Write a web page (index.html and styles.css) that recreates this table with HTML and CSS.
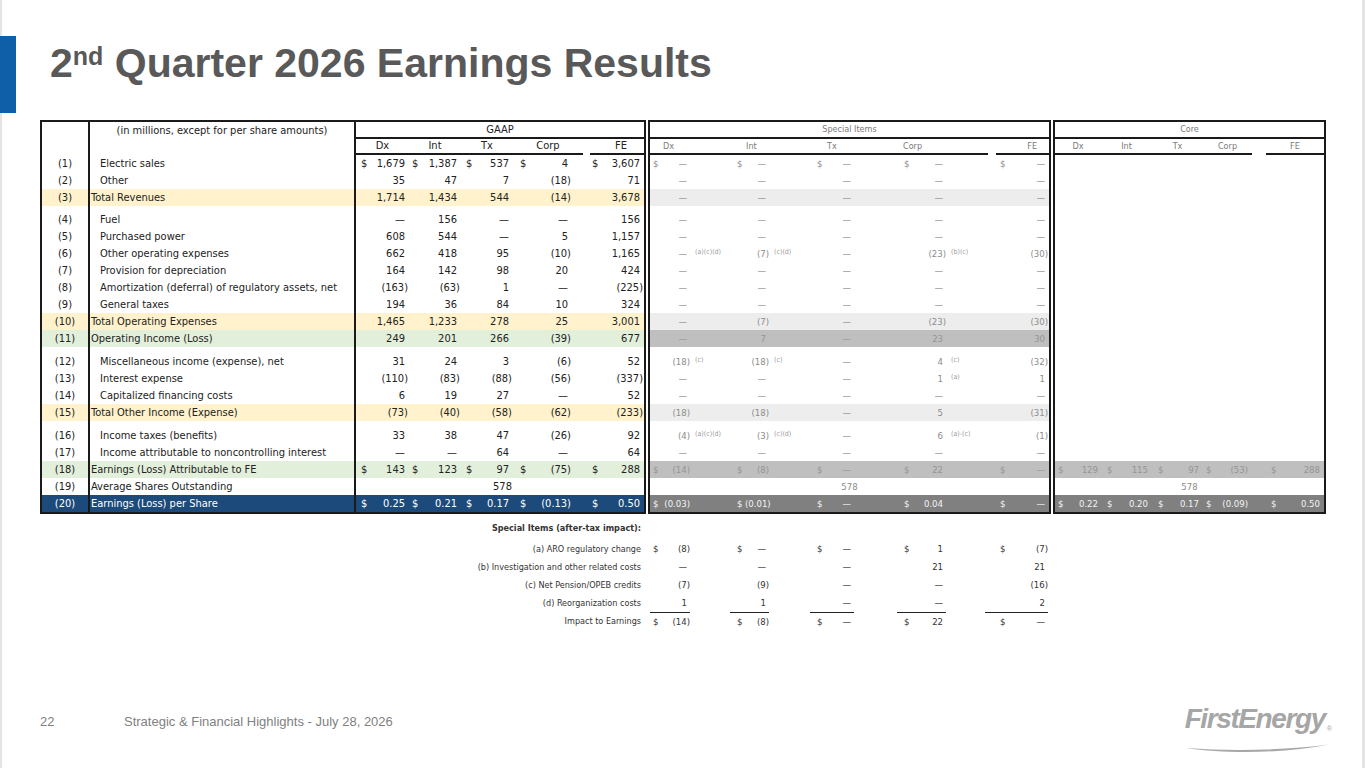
FILE: index.html
```html
<!DOCTYPE html>
<html lang="en">
<head>
<meta charset="utf-8">
<title>2nd Quarter 2026 Earnings Results</title>
<link rel="stylesheet" href="styles.css">
</head>
<body>
<div class="slide">
  <header class="head">
    <div class="bar"></div>
    <h1>2<sup>nd</sup> Quarter 2026 Earnings Results</h1>
  </header>

  <section class="tables">
    <div class="box gaap">
      <div class="row h1r"><div class="no"></div><div class="lb hd">(in millions, except for per share amounts)</div><div class="gh">GAAP</div></div>
      <div class="row h2r"><div class="no"></div><div class="lb"></div><div class="u">Dx</div><div class="u">Int</div><div class="u">Tx</div><div class="u ux">Corp</div><div class="u uf">FE</div></div>
      <div class="row v"><div class="no">(1)</div><div class="lb">Electric sales</div><div class="c"><i>$</i>1,679</div><div class="c"><i>$</i>1,387</div><div class="c"><i>$</i>537</div><div class="c"><i>$</i>4</div><div class="c"><i>$</i>3,607</div></div>
      <div class="row v"><div class="no">(2)</div><div class="lb">Other</div><div class="c">35</div><div class="c">47</div><div class="c">7</div><div class="c n">(18)</div><div class="c">71</div></div>
      <div class="row v y"><div class="no">(3)</div><div class="lb t">Total Revenues</div><div class="c">1,714</div><div class="c">1,434</div><div class="c">544</div><div class="c n">(14)</div><div class="c">3,678</div></div>
      <div class="row g5"><div class="no"></div><div class="lb"></div></div>
      <div class="row v"><div class="no">(4)</div><div class="lb">Fuel</div><div class="c">—</div><div class="c">156</div><div class="c">—</div><div class="c">—</div><div class="c">156</div></div>
      <div class="row v"><div class="no">(5)</div><div class="lb">Purchased power</div><div class="c">608</div><div class="c">544</div><div class="c">—</div><div class="c">5</div><div class="c">1,157</div></div>
      <div class="row v"><div class="no">(6)</div><div class="lb">Other operating expenses</div><div class="c">662</div><div class="c">418</div><div class="c">95</div><div class="c n">(10)</div><div class="c">1,165</div></div>
      <div class="row v"><div class="no">(7)</div><div class="lb">Provision for depreciation</div><div class="c">164</div><div class="c">142</div><div class="c">98</div><div class="c">20</div><div class="c">424</div></div>
      <div class="row v"><div class="no">(8)</div><div class="lb">Amortization (deferral) of regulatory assets, net</div><div class="c n">(163)</div><div class="c n">(63)</div><div class="c">1</div><div class="c">—</div><div class="c n">(225)</div></div>
      <div class="row v"><div class="no">(9)</div><div class="lb">General taxes</div><div class="c">194</div><div class="c">36</div><div class="c">84</div><div class="c">10</div><div class="c">324</div></div>
      <div class="row v y"><div class="no">(10)</div><div class="lb t">Total Operating Expenses</div><div class="c">1,465</div><div class="c">1,233</div><div class="c">278</div><div class="c">25</div><div class="c">3,001</div></div>
      <div class="row v gr"><div class="no">(11)</div><div class="lb t">Operating Income (Loss)</div><div class="c">249</div><div class="c">201</div><div class="c">266</div><div class="c n">(39)</div><div class="c">677</div></div>
      <div class="row g6"><div class="no"></div><div class="lb"></div></div>
      <div class="row v"><div class="no">(12)</div><div class="lb">Miscellaneous income (expense), net</div><div class="c">31</div><div class="c">24</div><div class="c">3</div><div class="c n">(6)</div><div class="c">52</div></div>
      <div class="row v"><div class="no">(13)</div><div class="lb">Interest expense</div><div class="c n">(110)</div><div class="c n">(83)</div><div class="c n">(88)</div><div class="c n">(56)</div><div class="c n">(337)</div></div>
      <div class="row v"><div class="no">(14)</div><div class="lb">Capitalized financing costs</div><div class="c">6</div><div class="c">19</div><div class="c">27</div><div class="c">—</div><div class="c">52</div></div>
      <div class="row v y"><div class="no">(15)</div><div class="lb t">Total Other Income (Expense)</div><div class="c n">(73)</div><div class="c n">(40)</div><div class="c n">(58)</div><div class="c n">(62)</div><div class="c n">(233)</div></div>
      <div class="row g6"><div class="no"></div><div class="lb"></div></div>
      <div class="row v"><div class="no">(16)</div><div class="lb">Income taxes (benefits)</div><div class="c">33</div><div class="c">38</div><div class="c">47</div><div class="c n">(26)</div><div class="c">92</div></div>
      <div class="row v"><div class="no">(17)</div><div class="lb">Income attributable to noncontrolling interest</div><div class="c">—</div><div class="c">—</div><div class="c">64</div><div class="c">—</div><div class="c">64</div></div>
      <div class="row v gr"><div class="no">(18)</div><div class="lb t">Earnings (Loss) Attributable to FE</div><div class="c"><i>$</i>143</div><div class="c"><i>$</i>123</div><div class="c"><i>$</i>97</div><div class="c n"><i>$</i>(75)</div><div class="c"><i>$</i>288</div></div>
      <div class="row v"><div class="no">(19)</div><div class="lb t">Average Shares Outstanding</div><div class="mid">578</div></div>
      <div class="row v bl"><div class="no">(20)</div><div class="lb t">Earnings (Loss) per Share</div><div class="c"><i>$</i>0.25</div><div class="c"><i>$</i>0.21</div><div class="c"><i>$</i>0.17</div><div class="c n"><i>$</i>(0.13)</div><div class="c"><i>$</i>0.50</div></div>
    </div>

    <div class="box sp">
      <div class="row h1r"><div class="sh">Special Items</div></div>
      <div class="row h2r"><div class="u">Dx</div><div class="u">Int</div><div class="u">Tx</div><div class="u">Corp</div><div class="u">FE</div></div>
      <div class="row v scol"><div class="c"><i>$</i><span>—</span></div><div class="c"><i>$</i><span>—</span></div><div class="c"><i>$</i><span>—</span></div><div class="c"><i>$</i><span>—</span></div><div class="c"><i>$</i><span>—</span></div></div>
      <div class="row v scol"><div class="c"><span>—</span></div><div class="c"><span>—</span></div><div class="c"><span>—</span></div><div class="c"><span>—</span></div><div class="c"><span>—</span></div></div>
      <div class="row v scol l1"><div class="c"><span>—</span></div><div class="c"><span>—</span></div><div class="c"><span>—</span></div><div class="c"><span>—</span></div><div class="c"><span>—</span></div></div>
      <div class="g5"></div>
      <div class="row v scol"><div class="c"><span>—</span></div><div class="c"><span>—</span></div><div class="c"><span>—</span></div><div class="c"><span>—</span></div><div class="c"><span>—</span></div></div>
      <div class="row v scol"><div class="c"><span>—</span></div><div class="c"><span>—</span></div><div class="c"><span>—</span></div><div class="c"><span>—</span></div><div class="c"><span>—</span></div></div>
      <div class="row v scol"><div class="c"><span>—</span><small>(a)(c)(d)</small></div><div class="c n"><span>(7)</span><small>(c)(d)</small></div><div class="c"><span>—</span></div><div class="c n"><span>(23)</span><small>(b)(c)</small></div><div class="c n"><span>(30)</span></div></div>
      <div class="row v scol"><div class="c"><span>—</span></div><div class="c"><span>—</span></div><div class="c"><span>—</span></div><div class="c"><span>—</span></div><div class="c"><span>—</span></div></div>
      <div class="row v scol"><div class="c"><span>—</span></div><div class="c"><span>—</span></div><div class="c"><span>—</span></div><div class="c"><span>—</span></div><div class="c"><span>—</span></div></div>
      <div class="row v scol"><div class="c"><span>—</span></div><div class="c"><span>—</span></div><div class="c"><span>—</span></div><div class="c"><span>—</span></div><div class="c"><span>—</span></div></div>
      <div class="row v scol l1"><div class="c"><span>—</span></div><div class="c n"><span>(7)</span></div><div class="c"><span>—</span></div><div class="c n"><span>(23)</span></div><div class="c n"><span>(30)</span></div></div>
      <div class="row v scol g2"><div class="c"><span>—</span></div><div class="c"><span>7</span></div><div class="c"><span>—</span></div><div class="c"><span>23</span></div><div class="c"><span>30</span></div></div>
      <div class="g6"></div>
      <div class="row v scol"><div class="c n"><span>(18)</span><small>(c)</small></div><div class="c n"><span>(18)</span><small>(c)</small></div><div class="c"><span>—</span></div><div class="c"><span>4</span><small>(c)</small></div><div class="c n"><span>(32)</span></div></div>
      <div class="row v scol"><div class="c"><span>—</span></div><div class="c"><span>—</span></div><div class="c"><span>—</span></div><div class="c"><span>1</span><small>(a)</small></div><div class="c"><span>1</span></div></div>
      <div class="row v scol"><div class="c"><span>—</span></div><div class="c"><span>—</span></div><div class="c"><span>—</span></div><div class="c"><span>—</span></div><div class="c"><span>—</span></div></div>
      <div class="row v scol l1"><div class="c n"><span>(18)</span></div><div class="c n"><span>(18)</span></div><div class="c"><span>—</span></div><div class="c"><span>5</span></div><div class="c n"><span>(31)</span></div></div>
      <div class="g6"></div>
      <div class="row v scol"><div class="c n"><span>(4)</span><small>(a)(c)(d)</small></div><div class="c n"><span>(3)</span><small>(c)(d)</small></div><div class="c"><span>—</span></div><div class="c"><span>6</span><small>(a)-(c)</small></div><div class="c n"><span>(1)</span></div></div>
      <div class="row v scol"><div class="c"><span>—</span></div><div class="c"><span>—</span></div><div class="c"><span>—</span></div><div class="c"><span>—</span></div><div class="c"><span>—</span></div></div>
      <div class="row v scol g2"><div class="c n"><i>$</i><span>(14)</span></div><div class="c n"><i>$</i><span>(8)</span></div><div class="c"><i>$</i><span>—</span></div><div class="c"><i>$</i><span>22</span></div><div class="c"><i>$</i><span>—</span></div></div>
      <div class="row v"><div class="mid">578</div></div>
      <div class="row v scol dk"><div class="c n"><i>$</i><span>(0.03)</span></div><div class="c n"><i>$</i><span>(0.01)</span></div><div class="c"><i>$</i><span>—</span></div><div class="c"><i>$</i><span>0.04</span></div><div class="c"><i>$</i><span>—</span></div></div>
    </div>

    <div class="box core">
      <div class="row h1r"><div class="sh">Core</div></div>
      <div class="row h2r"><div class="u">Dx</div><div class="u">Int</div><div class="u">Tx</div><div class="u">Corp</div><div class="u uf">FE</div></div>
      <div class="cgap"></div>
      <div class="row v g2"><div class="c"><i>$</i>129</div><div class="c"><i>$</i>115</div><div class="c"><i>$</i>97</div><div class="c n"><i>$</i>(53)</div><div class="c"><i>$</i>288</div></div>
      <div class="row v"><div class="mid">578</div></div>
      <div class="row v dk"><div class="c"><i>$</i>0.22</div><div class="c"><i>$</i>0.20</div><div class="c"><i>$</i>0.17</div><div class="c n"><i>$</i>(0.09)</div><div class="c"><i>$</i>0.50</div></div>
    </div>
  </section>

  <section class="notes">
    <div class="ntitle">Special Items (after-tax impact):</div>
    <div class="nrow first"><div class="nl">(a) ARO regulatory change</div><div class="scol"><div class="c n"><i>$</i><span>(8)</span></div><div class="c"><i>$</i><span>—</span></div><div class="c"><i>$</i><span>—</span></div><div class="c"><i>$</i><span>1</span></div><div class="c n"><i>$</i><span>(7)</span></div></div></div>
    <div class="nrow"><div class="nl">(b) Investigation and other related costs</div><div class="scol"><div class="c"><span>—</span></div><div class="c"><span>—</span></div><div class="c"><span>—</span></div><div class="c"><span>21</span></div><div class="c"><span>21</span></div></div></div>
    <div class="nrow"><div class="nl">(c) Net Pension/OPEB credits</div><div class="scol"><div class="c n"><span>(7)</span></div><div class="c n"><span>(9)</span></div><div class="c"><span>—</span></div><div class="c"><span>—</span></div><div class="c n"><span>(16)</span></div></div></div>
    <div class="nrow"><div class="nl">(d) Reorganization costs</div><div class="scol"><div class="c"><span>1</span></div><div class="c"><span>1</span></div><div class="c"><span>—</span></div><div class="c"><span>—</span></div><div class="c"><span>2</span></div></div></div>
    <div class="nrow tot"><div class="nl">Impact to Earnings</div><div class="scol"><div class="c n"><i>$</i><span>(14)</span></div><div class="c n"><i>$</i><span>(8)</span></div><div class="c"><i>$</i><span>—</span></div><div class="c"><i>$</i><span>22</span></div><div class="c"><i>$</i><span>—</span></div></div></div>
  </section>

  <footer class="foot">
    <span class="pg">22</span>
    <span class="ft">Strategic &amp; Financial Highlights - July 28, 2026</span>
    <div class="logo">
      <div class="name">FirstEnergy<span class="reg">®</span></div>
      <svg class="swoosh" width="146" height="10" viewBox="0 0 146 10"><path d="M1 5 C 42 11, 98 10.5, 144 1.5 C 99 7.5, 44 8.2, 1 5 Z" fill="#a8a8a8"/></svg>
    </div>
  </footer>
</div>
</body>
</html>
```

FILE: styles.css
```css
* { box-sizing: border-box; }
body { margin: 0; background: #fff; }

.slide {
  width: 1365px;
  height: 768px;
  overflow: hidden;
  background: #fff;
  box-shadow: inset 2px 0 #e4e4e4, inset -3px 0 #e4e4e4;
  font-family: "Liberation Sans Narrow", "Arial Narrow", "DejaVu Sans Condensed", sans-serif;
}

/* title */
.head { display: flex; margin-top: 36px; height: 77px; }
.bar { width: 16px; background: #0f5fa8; }
.head h1 {
  margin: 7px 0 0 34px;
  font: bold 41px/41px "Liberation Sans", Arial, sans-serif;
  color: #595959;
}
.head h1 sup { font-size: 25px; line-height: 0; vertical-align: 12px; }

/* tables */
.tables { display: flex; gap: 2px; margin: 7px 0 0 40px; }
.box { border: 2px solid #1a1a1a; display: flex; flex-direction: column; }
.gaap { width: 606px; font-size: 11px; color: #222; }
.sp { width: 403px; font-size: 9.5px; color: #8c8c8c; }
.core { width: 273px; font-size: 9.5px; color: #8c8c8c; }

.row { display: grid; height: 17px; line-height: 17px; white-space: nowrap; }
.gaap .row { grid-template-columns: 48px 266px 53px 52px 52px 59px 72px; }
.sp .row { grid-template-columns: 80px 80px 87px 88px 64px; }
.core .row { grid-template-columns: 46px 51px 51px 49px 72px; }
.h2r { height: 16px; }
.g5 { height: 5px; }
.g6 { height: 6px; }
.cgap { height: 306px; }

.no { border-right: 2px solid #1a1a1a; text-align: center; }
.lb { border-right: 2px solid #1a1a1a; padding-left: 10px; }
.lb.t { padding-left: 1px; }
.lb.hd { padding-left: 0; text-align: center; }

.gh { grid-column: 3 / 8; text-align: center; border-bottom: 2px solid #1a1a1a; line-height: 15px; }
.sh { grid-column: 1 / -1; text-align: center; border-bottom: 2px solid #1a1a1a; line-height: 15px; color: #7a7a7a; font-size: 9px; }
.h2r .u { border-bottom: 2px solid #1a1a1a; line-height: 14px; text-align: center; }
.gaap .h2r .ux { margin-right: -11px; }
.gaap .h2r .uf { margin-left: 18px; padding-left: 8px; }
.core .h2r .uf { margin-left: 14px; }
.sp .h2r .u, .core .h2r .u { color: #7a7a7a; font-size: 9px; }
.sp .h2r .u { text-align: left; }
.sp .h2r > :nth-child(1) { padding-left: 13px; }
.sp .h2r > :nth-child(2) { padding-left: 16px; }
.sp .h2r > :nth-child(3) { padding-left: 17px; }
.sp .h2r > :nth-child(4) { padding-left: 6px; margin-right: -3px; }
.sp .h2r > :nth-child(5) { margin-left: 11px; text-align: right; padding-right: 12px; }

.mid { grid-column: 1 / -1; text-align: center; }
.gaap .mid { grid-column: 3 / 8; }

/* GAAP and Core value cells: $ at left, figure at right */
.gaap .c, .core .c { display: flex; justify-content: flex-end; padding-right: 4px; }
.gaap .c i, .core .c i { font-style: normal; margin-right: auto; }
.gaap .c.n { padding-right: 1px; }
.gaap .v > :nth-child(3) { padding-left: 5px; }
.gaap .v > :nth-child(4) { padding-left: 3px; }
.gaap .v > :nth-child(5) { padding-left: 5px; }
.gaap .v > :nth-child(6) { padding-left: 7px; }
.gaap .v > :nth-child(7) { padding-left: 20px; }

.core .v > :nth-child(1) { padding-left: 3px; padding-right: 3px; }
.core .v > :nth-child(2) { padding-left: 6px; }
.core .v > :nth-child(3) { padding-left: 6px; }
.core .v > :nth-child(4) { padding-left: 3px; padding-right: 7px; }
.core .v > .n:nth-child(4) { padding-right: 4px; }
.core .v > :nth-child(5) { padding-left: 19px; }

/* Special item cells: $ | figure | footnote */
.scol .c { display: grid; grid-template-columns: var(--d) var(--w) auto; align-items: start; }
.scol .c i { grid-column: 1; font-style: normal; padding-left: var(--p); }
.scol .c span { grid-column: 2; text-align: right; padding-right: 3px; }
.scol .c.n span { padding-right: 0; }
.scol .c small { grid-column: 3; font-size: 7px; line-height: 14px; margin-left: 5px; color: #9a9a9a; }
.scol > :nth-child(1) { --d: 10px; --w: 30px; --p: 3px; }
.scol > :nth-child(2) { --d: 15px; --w: 24px; --p: 7px; }
.scol > :nth-child(3) { --d: 15px; --w: 29px; --p: 7px; }
.scol > :nth-child(4) { --d: 15px; --w: 34px; --p: 7px; }
.scol > :nth-child(5) { --d: 20px; --w: 43px; --p: 15px; }

/* bands */
.gaap .y { background: #fff2cc; }
.gaap .gr { background: #e2efda; }
.gaap .bl { background: #1c4a7a; color: #fff; }
.l1 { background: #ededed; }
.g2 { background: #bfbfbf; color: #959595; }
.dk { background: #808080; color: #f4f4f4; }

/* notes */
.notes { margin-top: 5px; font-size: 9.5px; color: #333; }
.ntitle { width: 650px; padding-right: 9px; text-align: right; font-weight: bold; font-size: 9px; height: 18px; line-height: 18px; }
.nrow { display: flex; height: 18px; line-height: 18px; white-space: nowrap; }
.nrow.first { margin-top: 3px; }
.nl { width: 650px; padding-right: 9px; text-align: right; font-size: 9px; }
.nrow .scol { display: grid; grid-template-columns: 80px 80px 87px 88px 64px; }
.nrow.tot { height: 19px; }
.nrow.tot .c { justify-self: start; border-top: 1px solid #222; }

/* footer */
.foot { display: flex; align-items: flex-start; margin-top: 73px; height: 40px; }
.pg, .ft { font: 13px/14px "Liberation Sans", Arial, sans-serif; color: #7f7f7f; margin-top: 11px; }
.pg { margin-left: 40px; width: 84px; }
.logo { margin-left: auto; margin-right: 33px; display: flex; flex-direction: column; }
.logo .name { font: italic bold 28px/26px "Liberation Sans", Arial, sans-serif; color: #a6a6a6; letter-spacing: -1.4px; margin-top: 2px; }
.logo .reg { font-size: 7px; letter-spacing: 0; font-style: normal; font-weight: normal; margin-left: 2px; vertical-align: -3px; }
.swoosh { display: block; margin-top: 1px; }
```
